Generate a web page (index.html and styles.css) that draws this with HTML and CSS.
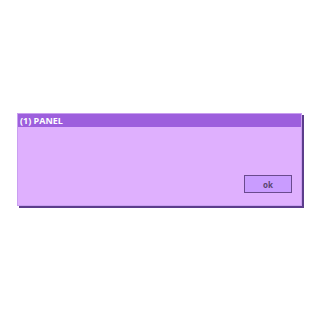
FILE: index.html
```html
<!DOCTYPE html>
<html>
<head>
<meta charset="utf-8">
<link rel="stylesheet" href="styles.css">
</head>
<body>
<div class="stage">
  <div class="panel">
    <div class="title">(1) PANEL</div>
    <div class="content">
      <button class="ok">ok</button>
    </div>
  </div>
</div>
</body>
</html>
```
FILE: styles.css
```css
html, body { margin: 0; padding: 0; background: #ffffff; }
.stage {
  width: 320px; height: 320px;
  box-sizing: border-box;
  padding: 113px 0 0 17px;
}
.panel {
  width: 285px;
  height: 93px;
  box-sizing: border-box;
  background: #dfb0fe;
  border: 1px solid #c99ff0;
  box-shadow: 2px 2px 0 #5c3d8c;
  display: flex; flex-direction: column;
  font-family: "Open Sans", "Noto Sans", sans-serif;
}
.title {
  background: #9d5fdd;
  color: #ffffff;
  font-size: 9px;
  font-weight: 700;
  height: 13px;
  line-height: 13px;
  padding-left: 2px;
}
.content {
  flex: 1;
  display: flex; justify-content: flex-end; align-items: flex-end;
  padding: 0 9px 12px 0;
}
.ok {
  width: 48px; height: 18px;
  box-sizing: border-box;
  background: #c99cff;
  border: 1px solid #6a4a8e;
  color: #5a4470;
  font-family: "Open Sans", "Noto Sans", sans-serif;
  font-size: 8px; font-weight: 700;
  padding: 0;
}
```
